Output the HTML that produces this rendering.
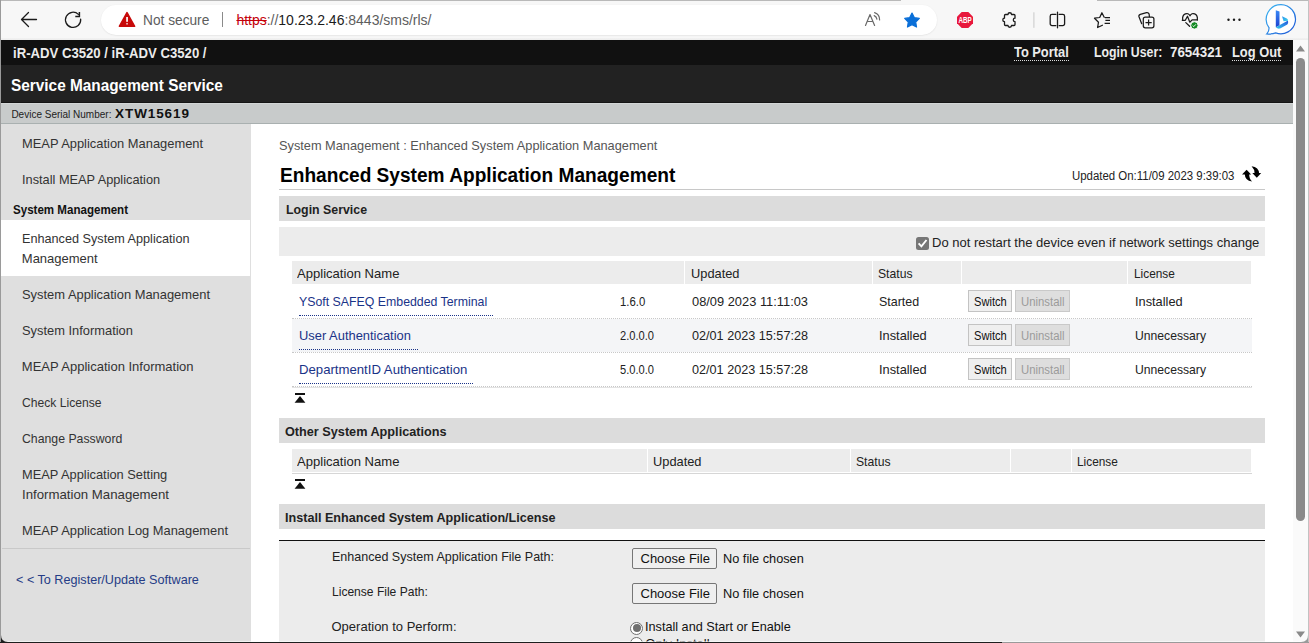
<!DOCTYPE html>
<html><head><meta charset="utf-8">
<style>
*{margin:0;padding:0;box-sizing:border-box}
html,body{width:1309px;height:643px;overflow:hidden;background:#f7f7f7;font-family:"Liberation Sans",sans-serif}
.a{position:absolute}
.t{position:absolute;white-space:nowrap;line-height:1}
svg{position:absolute;overflow:visible}
</style></head><body>
<!-- ===== browser chrome ===== -->
<div class="a" style="left:0;top:0;width:1309px;height:40px;background:#f7f7f7"></div>
<div class="a" style="left:0;top:0;width:901px;height:1px;background:#b9b9b9"></div>
<div class="a" style="left:1097px;top:0;width:212px;height:1px;background:#b9b9b9"></div>
<div class="a" style="left:0;top:0;width:1px;height:643px;background:#9a9a9a"></div>
<div class="a" style="left:1308px;top:0;width:1px;height:643px;background:#c2c2c2"></div>
<!-- address pill -->
<div class="a" style="left:1px;top:38px;width:1307px;height:2px;background:linear-gradient(#f2f2f2,#ececec)"></div>
<div class="a" style="left:101px;top:5px;width:836px;height:30px;border-radius:15px;background:#fff;box-shadow:0 0.5px 1.5px rgba(0,0,0,0.10)"></div>
<!-- back arrow -->
<svg style="left:0;top:0" width="1309" height="40">
  <g fill="none" stroke="#1b1b1b" stroke-width="1.3" stroke-linecap="round" stroke-linejoin="round">
    <path d="M21.5 19.5 H36.5 M28.5 12.5 L21.5 19.5 L28.5 26.5"/>
    <path d="M78.4 14.4 A7.6 7.6 0 1 0 80.65 19.1"/>
    <path d="M79.4 12.1 V16.6 H75.3" stroke-width="1.5" stroke-linecap="butt" stroke-linejoin="miter"/>
    <!-- read aloud -->
    <path d="M865.5 25.5 L870 14.6 L874.6 25.5 M867.1 21.5 H873" stroke="#6a6a6a" stroke-width="1.2"/>
    <path d="M874.2 15.6 A4.6 4.6 0 0 1 876.9 19.1" stroke="#6a6a6a" stroke-width="1.2"/>
    <path d="M874.6 12.6 A7.6 7.6 0 0 1 879.6 20" stroke="#6a6a6a" stroke-width="1.2"/>
    <!-- puzzle -->
    <path d="M1004.5 15.5 q0 -1 1 -1 h2.5 a1.75 1.75 0 0 1 3.5 0 h2.5 q1 0 1 1 v2.7 a1.7 1.7 0 0 0 0 3.4 v2.9 q0 1 -1 1 h-2.5 a1.75 1.75 0 0 1 -3.5 0 h-2.5 q-1 0 -1 -1 v-2.9 a1.7 1.7 0 0 1 0 -3.4 z" stroke-width="1.3"/>
    <!-- split screen -->
    <path d="M1055.8 14.4 H1052 a1.8 1.8 0 0 0 -1.8 1.8 v7.6 a1.8 1.8 0 0 0 1.8 1.8 H1055.8 M1057.5 12.2 V27.8 M1059.2 14.4 H1062.8 a1.8 1.8 0 0 1 1.8 1.8 v7.6 a1.8 1.8 0 0 1 -1.8 1.8 H1059.2" stroke-width="1.3"/>
    <!-- favorites star with lines -->
    <path d="M1102.4 25.2 L1097.6 27.5 L1098.5 22.2 L1094.5 18.2 L1099.7 17.5 L1101.9 12.7 L1104.2 17.3" stroke-width="1.25"/>
    <path d="M1104.9 17.6 H1110 M1105.4 20.4 H1110 M1104.6 23.3 H1110" stroke-width="1.25" stroke-linecap="butt"/>
    <!-- collections -->
    <path d="M1141.7 23.7 L1139 16.8 Q1138.4 14.9 1140.3 14.3 L1146.5 12.6 Q1148.4 12.2 1149.1 14 L1149.4 16.6" stroke-width="1.25"/>
    <rect x="1143.3" y="17.1" width="10.6" height="10.7" rx="2" stroke-width="1.25"/>
    <path d="M1148.6 19.4 V25.6 M1145.5 22.5 H1151.7" stroke-width="1.25" stroke-linecap="butt"/>
    <!-- health heart -->
    <path d="M1182.7 19.8 C1181.8 13.8 1188.2 11.4 1190 15.8 C1191.8 11.4 1198.2 13.8 1197.3 19.8" stroke-width="1.25"/>
    <path d="M1181.8 20.3 H1185.3 L1187.5 16.2 L1189.8 22.2 L1192.1 19.9 H1198" stroke-width="1.25" stroke-linecap="butt"/>
    <path d="M1185.8 22.6 L1189.6 26.3" stroke-width="1.25"/>
  </g>
  <!-- warning triangle -->
  <path d="M127 12.6 L134.6 26.3 L119.4 26.3 Z" fill="#c80a0a" stroke="#c80a0a" stroke-width="1.6" stroke-linejoin="round"/>
  <rect x="126.2" y="17" width="1.7" height="4.8" fill="#fff"/>
  <rect x="126.2" y="23.1" width="1.7" height="1.4" fill="#f4c8c8"/>
  <!-- separator in pill -->
  <rect x="222" y="12" width="1" height="15" fill="#8a8a8a"/>
  <!-- star -->
  <path d="M912.00 13.10 L914.29 17.64 L919.32 18.42 L915.71 22.01 L916.53 27.03 L912.00 24.70 L907.47 27.03 L908.29 22.01 L904.68 18.42 L909.71 17.64 Z" fill="#0a6fd8" stroke="#0a6fd8" stroke-width="1.2" stroke-linejoin="round"/>
  <!-- ABP -->
  <path d="M961.7 12 h6.6 l4.7 4.7 v6.6 l-4.7 4.7 h-6.6 l-4.7 -4.7 v-6.6 z" fill="#e8173c"/>
  <text x="958.4" y="22.8" font-family="Liberation Sans" font-weight="bold" font-size="8.4" fill="#fff" textLength="13.2" lengthAdjust="spacingAndGlyphs">ABP</text>
  <!-- toolbar separator -->
  <rect x="1033.4" y="12.3" width="1" height="15.5" fill="#c8c8c8"/>
  <!-- health green check -->
  <circle cx="1194.4" cy="25.4" r="3.7" fill="#138a24" stroke="#f7f7f7" stroke-width="1"/>
  <path d="M1192.6 25.5 l1.2 1.1 l2.1 -2.3" fill="none" stroke="#fff" stroke-width="0.9"/>
  <!-- more dots -->
  <circle cx="1228.5" cy="19.8" r="1.2" fill="#1b1b1b"/>
  <circle cx="1234" cy="19.8" r="1.2" fill="#1b1b1b"/>
  <circle cx="1239.5" cy="19.8" r="1.2" fill="#1b1b1b"/>
  <!-- bing -->
  <defs>
    <linearGradient id="bst" x1="0" y1="0" x2="1" y2="1"><stop offset="0" stop-color="#3ab8f2"/><stop offset="1" stop-color="#1e55d6"/></linearGradient>
    <linearGradient id="bbar" x1="0" y1="0" x2="0" y2="1"><stop offset="0" stop-color="#3a8af5"/><stop offset="1" stop-color="#1a3fd0"/></linearGradient>
    <linearGradient id="brib" x1="0" y1="1" x2="1" y2="0"><stop offset="0" stop-color="#35c6ee"/><stop offset="1" stop-color="#2456dc"/></linearGradient>
    <linearGradient id="btri" x1="0" y1="0" x2="1" y2="1"><stop offset="0" stop-color="#2a90f0"/><stop offset="1" stop-color="#3fd6e6"/></linearGradient>
  </defs>
  <path d="M1281 4.6 a14.7 14.6 0 1 1 -5.3 28.3 q-3.6 1.3 -8.9 1.1 q2.3 -2.3 2.3 -6.2 a14.7 14.6 0 0 1 11.9 -23.2 z" fill="#fff" stroke="url(#bst)" stroke-width="1.2"/>
  <path d="M1275.8 10.2 L1279.5 11.6 V25.3 L1275.8 27.3 Z" fill="url(#bbar)"/>
  <path d="M1275.8 27.3 L1279.5 25.3 L1288 20.6 Q1288.6 22.8 1287.3 24.4 L1280.6 28.3 Q1278 29.6 1275.8 27.3 Z" fill="url(#brib)"/>
  <path d="M1282 16.2 L1286.8 18.5 Q1288.2 19.3 1288 20.7 L1283.6 21.3 Z" fill="url(#btri)"/>
</svg>
<!-- URL -->
<div class="t" style="left:236.4px;top:12.7px;font-size:14px;color:#5d5d5d;letter-spacing:-0.01px"><span style="color:#c5000b;text-decoration:line-through;text-decoration-color:#c5000b">https</span>://<span style="color:#1b1b1b">10.23.2.46</span>:8443/sms/rls/</div>

<!-- ===== page ===== -->
<div class="a" style="left:1px;top:40px;width:1292px;height:25px;background:#111"></div>
<div class="a" style="left:1px;top:65px;width:1292px;height:37px;background:#222"></div>
<div class="a" style="left:1px;top:102px;width:1292px;height:1px;background:#151515"></div>
<div class="a" style="left:1px;top:103px;width:1292px;height:20px;background:#c8cbcb;border-top:1px solid #d3d6d6"></div>
<div class="a" style="left:1px;top:123px;width:1292px;height:1px;background:#a9b0b0"></div>
<!-- dotted underlines top bar -->
<div class="a" style="left:1014px;top:60px;width:55px;height:1px;border-top:1px dotted #ddd"></div>
<div class="a" style="left:1232px;top:60px;width:49px;height:1px;border-top:1px dotted #ddd"></div>

<!-- sidebar -->
<div class="a" style="left:1px;top:124px;width:250px;height:519px;background:#dfdfdf"></div>
<div class="a" style="left:1px;top:220px;width:249px;height:56px;background:#fff"></div>
<div class="a" style="left:2px;top:548px;width:248px;height:1px;background:#c9c9c9"></div>

<!-- main -->
<div class="a" style="left:251px;top:124px;width:1042px;height:519px;background:#fff"></div>
<div class="a" style="left:279px;top:189px;width:986px;height:1px;background:#c8c8c8"></div>
<!-- refresh icon -->
<svg style="left:0;top:0" width="1309" height="643">
  <g fill="#000">
    <path d="M1242 174.4 L1246.6 169.8 L1251.1 174.4 Z"/>
    <path d="M1244.8 174 Q1244.8 180.6 1252.1 181.6 Q1249 178.6 1249.2 174 Z"/>
    <path d="M1252.3 173.1 L1261.2 173.1 L1256.8 177.8 Z"/>
    <path d="M1251.6 166.2 Q1258.9 167.2 1259.1 173.4 L1254.6 173.4 Q1254.6 169.2 1251.6 166.2 Z"/>
  </g>
</svg>
<!-- Login Service section -->
<div class="a" style="left:279px;top:196px;width:986px;height:25px;background:#dcdcdc"></div>
<div class="a" style="left:279px;top:227px;width:986px;height:29px;background:#ececec"></div>
<!-- checkbox -->
<div class="a" style="left:916px;top:236.8px;width:13px;height:13px;border-radius:2.5px;background:#767676"></div>
<svg style="left:0;top:0" width="1309" height="643"><path d="M918.6 243.4 l2.8 2.9 l5.1 -6.3" fill="none" stroke="#fff" stroke-width="1.9"/></svg>

<!-- table 1 header -->
<div class="a" style="left:292px;top:261px;width:392px;height:23px;background:#ececec"></div>
<div class="a" style="left:685px;top:261px;width:187px;height:23px;background:#ececec"></div>
<div class="a" style="left:873px;top:261px;width:88px;height:23px;background:#ececec"></div>
<div class="a" style="left:962px;top:261px;width:165px;height:23px;background:#ececec"></div>
<div class="a" style="left:1128px;top:261px;width:123px;height:23px;background:#ececec"></div>
<!-- rows -->
<div class="a" style="left:292px;top:318px;width:960px;height:1px;border-top:1px dotted #c8c8c8"></div>
<div class="a" style="left:292px;top:319px;width:960px;height:33px;background:#f4f5f7"></div>
<div class="a" style="left:292px;top:352px;width:960px;height:1px;border-top:1px dotted #c8c8c8"></div>
<div class="a" style="left:292px;top:386px;width:960px;height:1px;border-top:1px dotted #c8c8c8"></div>
<div class="a" style="left:292px;top:387px;width:960px;height:1px;background:#e2e2e2"></div>
<!-- link underlines -->
<div class="a" style="left:299px;top:315px;width:194px;height:1px;border-top:1px dotted #1a3388"></div>
<div class="a" style="left:299px;top:349px;width:119px;height:1px;border-top:1px dotted #1a3388"></div>
<div class="a" style="left:299px;top:383px;width:174px;height:1px;border-top:1px dotted #1a3388"></div>
<!-- buttons -->
<div class="a" style="left:968px;top:290px;width:44px;height:22px;background:#efefef;border:1px solid #c3c3c3"></div>
<div class="a" style="left:1015px;top:290px;width:55px;height:22px;background:#dedede;border:1px solid #c9c9c9"></div>
<div class="a" style="left:968px;top:324px;width:44px;height:22px;background:#efefef;border:1px solid #c3c3c3"></div>
<div class="a" style="left:1015px;top:324px;width:55px;height:22px;background:#dedede;border:1px solid #c9c9c9"></div>
<div class="a" style="left:968px;top:358px;width:44px;height:22px;background:#efefef;border:1px solid #c3c3c3"></div>
<div class="a" style="left:1015px;top:358px;width:55px;height:22px;background:#dedede;border:1px solid #c9c9c9"></div>
<!-- to-top icons -->
<svg style="left:0;top:0" width="1309" height="643">
  <g fill="#111">
    <rect x="295" y="393" width="10" height="2"/>
    <path d="M294.6 402.7 L300 396.1 L305.4 402.7 Z"/>
    <rect x="295" y="479" width="10" height="2"/>
    <path d="M294.6 488.7 L300 482.1 L305.4 488.7 Z"/>
  </g>
</svg>

<!-- Other system apps -->
<div class="a" style="left:279px;top:418px;width:986px;height:25px;background:#dcdcdc"></div>
<div class="a" style="left:292px;top:449px;width:355px;height:23px;background:#ececec"></div>
<div class="a" style="left:648px;top:449px;width:202px;height:23px;background:#ececec"></div>
<div class="a" style="left:851px;top:449px;width:159px;height:23px;background:#ececec"></div>
<div class="a" style="left:1011px;top:449px;width:60px;height:23px;background:#ececec"></div>
<div class="a" style="left:1072px;top:449px;width:179px;height:23px;background:#ececec"></div>
<div class="a" style="left:292px;top:473px;width:960px;height:1px;background:#d6d6d6"></div>

<!-- Install -->
<div class="a" style="left:279px;top:504px;width:986px;height:25px;background:#dcdcdc"></div>
<div class="a" style="left:279px;top:540px;width:986px;height:1px;background:#111"></div>
<div class="a" style="left:279px;top:541px;width:986px;height:102px;background:#ececec"></div>
<div class="a" style="left:632px;top:548px;width:85px;height:21px;background:#efefef;border:1px solid #767676;border-radius:2px"></div>
<div class="a" style="left:632px;top:583px;width:85px;height:21px;background:#efefef;border:1px solid #767676;border-radius:2px"></div>
<div class="t" style="left:640.5px;top:552.2px;font-size:13px;color:#111">Choose File</div>
<div class="t" style="left:640.5px;top:587.2px;font-size:13px;color:#111">Choose File</div>
<!-- radios -->
<div class="a" style="left:630px;top:621.5px;width:13px;height:13px;border-radius:50%;border:1px solid #6f6f6f;background:#fff"></div>
<div class="a" style="left:632.5px;top:624px;width:8px;height:8px;border-radius:50%;background:#6f6f6f"></div>
<div class="a" style="left:630px;top:637px;width:13px;height:13px;border-radius:50%;border:1px solid #6f6f6f;background:#fff"></div>

<div class="t" style="left:143.30px;top:12.75px;font-size:14px;color:#5d5d5d;transform:scaleX(0.9794);transform-origin:0 0;">Not secure</div>
<div class="t" style="left:12.80px;top:46.05px;font-size:14px;color:#ececec;font-weight:bold;transform:scaleX(0.9385);transform-origin:0 0;">iR-ADV C3520 / iR-ADV C3520 /</div>
<div class="t" style="left:1014.00px;top:45.05px;font-size:14px;color:#ececec;font-weight:bold;transform:scaleX(0.9173);transform-origin:0 0;">To Portal</div>
<div class="t" style="left:1093.50px;top:45.05px;font-size:14px;color:#ececec;font-weight:bold;transform:scaleX(0.8781);transform-origin:0 0;">Login User:</div>
<div class="t" style="left:1170.00px;top:45.05px;font-size:14px;color:#ececec;font-weight:bold;transform:scaleX(0.9541);transform-origin:0 0;">7654321</div>
<div class="t" style="left:1232.00px;top:45.05px;font-size:14px;color:#ececec;font-weight:bold;transform:scaleX(0.9189);transform-origin:0 0;">Log Out</div>
<div class="t" style="left:11.00px;top:77.66px;font-size:16px;color:#ffffff;font-weight:bold;transform:scaleX(0.9603);transform-origin:0 0;">Service Management Service</div>
<div class="t" style="left:11.40px;top:110.33px;font-size:10px;color:#222;">Device Serial Number:</div>
<div class="t" style="left:115.10px;top:107.27px;font-size:13.5px;color:#111;font-weight:bold;letter-spacing:0.9px;">XTW15619</div>
<div class="t" style="left:22.00px;top:137.00px;font-size:13px;color:#333;transform:scaleX(0.9916);transform-origin:0 0;">MEAP Application Management</div>
<div class="t" style="left:22.00px;top:173.00px;font-size:13px;color:#333;transform:scaleX(0.9815);transform-origin:0 0;">Install MEAP Application</div>
<div class="t" style="left:13.20px;top:203.62px;font-size:12.5px;color:#111;font-weight:bold;transform:scaleX(0.9248);transform-origin:0 0;">System Management</div>
<div class="t" style="left:21.80px;top:232.20px;font-size:13px;color:#333;transform:scaleX(0.9739);transform-origin:0 0;">Enhanced System Application</div>
<div class="t" style="left:21.80px;top:251.70px;font-size:13px;color:#333;">Management</div>
<div class="t" style="left:21.80px;top:288.00px;font-size:13px;color:#333;transform:scaleX(0.9929);transform-origin:0 0;">System Application Management</div>
<div class="t" style="left:21.80px;top:323.80px;font-size:13px;color:#333;transform:scaleX(0.9903);transform-origin:0 0;">System Information</div>
<div class="t" style="left:21.80px;top:359.90px;font-size:13px;color:#333;">MEAP Application Information</div>
<div class="t" style="left:21.80px;top:396.00px;font-size:13px;color:#333;transform:scaleX(0.9324);transform-origin:0 0;">Check License</div>
<div class="t" style="left:21.80px;top:431.70px;font-size:13px;color:#333;transform:scaleX(0.9442);transform-origin:0 0;">Change Password</div>
<div class="t" style="left:21.80px;top:468.20px;font-size:13px;color:#333;transform:scaleX(0.9869);transform-origin:0 0;">MEAP Application Setting</div>
<div class="t" style="left:21.80px;top:487.80px;font-size:13px;color:#333;transform:scaleX(1.0171);transform-origin:0 0;">Information Management</div>
<div class="t" style="left:21.80px;top:524.10px;font-size:13px;color:#333;transform:scaleX(0.9907);transform-origin:0 0;">MEAP Application Log Management</div>
<div class="t" style="left:15.70px;top:573.10px;font-size:13px;color:#253c86;transform:scaleX(0.9708);transform-origin:0 0;">&lt; &lt; To Register/Update Software</div>
<div class="t" style="left:279.20px;top:139.00px;font-size:13px;color:#555;transform:scaleX(0.9822);transform-origin:0 0;">System Management : Enhanced System Application Management</div>
<div class="t" style="left:280.00px;top:165.59px;font-size:19.5px;color:#000;font-weight:bold;transform:scaleX(0.9798);transform-origin:0 0;">Enhanced System Application Management</div>
<div class="t" style="left:1071.60px;top:169.74px;font-size:12px;color:#222;transform:scaleX(0.9520);transform-origin:0 0;">Updated On:11/09 2023 9:39:03</div>
<div class="t" style="left:285.60px;top:203.82px;font-size:12.5px;color:#222;font-weight:bold;transform:scaleX(0.9882);transform-origin:0 0;">Login Service</div>
<div class="t" style="left:932.00px;top:236.00px;font-size:13px;color:#222;">Do not restart the device even if network settings change</div>
<div class="t" style="left:297.40px;top:266.80px;font-size:13px;color:#222;transform:scaleX(1.0050);transform-origin:0 0;">Application Name</div>
<div class="t" style="left:690.70px;top:266.80px;font-size:13px;color:#222;transform:scaleX(0.9868);transform-origin:0 0;">Updated</div>
<div class="t" style="left:877.90px;top:266.80px;font-size:13px;color:#222;transform:scaleX(0.9361);transform-origin:0 0;">Status</div>
<div class="t" style="left:1134.40px;top:266.80px;font-size:13px;color:#222;transform:scaleX(0.9105);transform-origin:0 0;">License</div>
<div class="t" style="left:299.30px;top:294.50px;font-size:13px;color:#1a3388;transform:scaleX(0.9482);transform-origin:0 0;">YSoft SAFEQ Embedded Terminal</div>
<div class="t" style="left:620.20px;top:294.50px;font-size:13px;color:#222;transform:scaleX(0.8750);transform-origin:0 0;">1.6.0</div>
<div class="t" style="left:691.50px;top:294.50px;font-size:13px;color:#222;transform:scaleX(0.9885);transform-origin:0 0;">08/09 2023 11:11:03</div>
<div class="t" style="left:879.30px;top:294.50px;font-size:13px;color:#222;transform:scaleX(0.9567);transform-origin:0 0;">Started</div>
<div class="t" style="left:1135.30px;top:294.50px;font-size:13px;color:#222;transform:scaleX(0.9831);transform-origin:0 0;">Installed</div>
<div class="t" style="left:299.30px;top:328.50px;font-size:13px;color:#1a3388;transform:scaleX(0.9925);transform-origin:0 0;">User Authentication</div>
<div class="t" style="left:620.20px;top:328.50px;font-size:13px;color:#222;transform:scaleX(0.8552);transform-origin:0 0;">2.0.0.0</div>
<div class="t" style="left:691.50px;top:328.50px;font-size:13px;color:#222;transform:scaleX(0.9725);transform-origin:0 0;">02/01 2023 15:57:28</div>
<div class="t" style="left:879.30px;top:328.50px;font-size:13px;color:#222;transform:scaleX(0.9851);transform-origin:0 0;">Installed</div>
<div class="t" style="left:1135.30px;top:328.50px;font-size:13px;color:#222;transform:scaleX(0.9358);transform-origin:0 0;">Unnecessary</div>
<div class="t" style="left:299.30px;top:362.50px;font-size:13px;color:#1a3388;transform:scaleX(1.0124);transform-origin:0 0;">DepartmentID Authentication</div>
<div class="t" style="left:620.20px;top:362.50px;font-size:13px;color:#222;transform:scaleX(0.8552);transform-origin:0 0;">5.0.0.0</div>
<div class="t" style="left:691.50px;top:362.50px;font-size:13px;color:#222;transform:scaleX(0.9725);transform-origin:0 0;">02/01 2023 15:57:28</div>
<div class="t" style="left:879.30px;top:362.50px;font-size:13px;color:#222;transform:scaleX(0.9851);transform-origin:0 0;">Installed</div>
<div class="t" style="left:1135.30px;top:362.50px;font-size:13px;color:#222;transform:scaleX(0.9358);transform-origin:0 0;">Unnecessary</div>
<div class="t" style="left:973.70px;top:295.54px;font-size:12px;color:#111;transform:scaleX(0.9280);transform-origin:0 0;">Switch</div>
<div class="t" style="left:1020.50px;top:295.54px;font-size:12px;color:#9b9b9b;transform:scaleX(0.9453);transform-origin:0 0;">Uninstall</div>
<div class="t" style="left:973.70px;top:329.54px;font-size:12px;color:#111;transform:scaleX(0.9280);transform-origin:0 0;">Switch</div>
<div class="t" style="left:1020.50px;top:329.54px;font-size:12px;color:#9b9b9b;transform:scaleX(0.9453);transform-origin:0 0;">Uninstall</div>
<div class="t" style="left:973.70px;top:363.54px;font-size:12px;color:#111;transform:scaleX(0.9280);transform-origin:0 0;">Switch</div>
<div class="t" style="left:1020.50px;top:363.54px;font-size:12px;color:#9b9b9b;transform:scaleX(0.9453);transform-origin:0 0;">Uninstall</div>
<div class="t" style="left:285.40px;top:426.02px;font-size:12.5px;color:#222;font-weight:bold;transform:scaleX(1.0140);transform-origin:0 0;">Other System Applications</div>
<div class="t" style="left:297.40px;top:455.00px;font-size:13px;color:#222;transform:scaleX(1.0050);transform-origin:0 0;">Application Name</div>
<div class="t" style="left:652.80px;top:455.00px;font-size:13px;color:#222;transform:scaleX(0.9868);transform-origin:0 0;">Updated</div>
<div class="t" style="left:856.00px;top:455.00px;font-size:13px;color:#222;transform:scaleX(0.9361);transform-origin:0 0;">Status</div>
<div class="t" style="left:1076.60px;top:455.00px;font-size:13px;color:#222;transform:scaleX(0.9105);transform-origin:0 0;">License</div>
<div class="t" style="left:285.00px;top:512.02px;font-size:12.5px;color:#222;font-weight:bold;transform:scaleX(1.0081);transform-origin:0 0;">Install Enhanced System Application/License</div>
<div class="t" style="left:331.50px;top:550.00px;font-size:13px;color:#222;transform:scaleX(0.9631);transform-origin:0 0;">Enhanced System Application File Path:</div>
<div class="t" style="left:331.50px;top:585.00px;font-size:13px;color:#222;transform:scaleX(0.9271);transform-origin:0 0;">License File Path:</div>
<div class="t" style="left:331.50px;top:619.80px;font-size:13px;color:#222;">Operation to Perform:</div>
<div class="t" style="left:722.50px;top:552.20px;font-size:13px;color:#111;transform:scaleX(0.9808);transform-origin:0 0;">No file chosen</div>
<div class="t" style="left:722.50px;top:587.20px;font-size:13px;color:#111;transform:scaleX(0.9808);transform-origin:0 0;">No file chosen</div>
<div class="t" style="left:645.30px;top:619.50px;font-size:13px;color:#111;transform:scaleX(0.9740);transform-origin:0 0;">Install and Start or Enable</div>
<div class="t" style="left:645.30px;top:637.00px;font-size:13px;color:#111;">Only Install</div>

<!-- scrollbar -->
<div class="a" style="left:1293px;top:40px;width:15px;height:602px;background:#fafafa"></div>
<svg style="left:0;top:0" width="1309" height="643">
  <path d="M1296 51.5 L1300.5 45.5 L1305 51.5 Z" fill="#8a8a8a"/>
  <path d="M1296 631.5 L1300.5 637.5 L1305 631.5 Z" fill="#8a8a8a"/>
</svg>
<div class="a" style="left:1296px;top:58px;width:9px;height:463px;border-radius:4.5px;background:#8a8a8a"></div>

<!-- bottom window border -->
<div class="a" style="left:1px;top:641px;width:1307px;height:1px;background:rgba(255,255,255,0.55)"></div>
<div class="a" style="left:0;top:642px;width:1002px;height:1px;background:#1e1e1e"></div>
<div class="a" style="left:1002px;top:642px;width:307px;height:1px;background:#9a9a9a"></div>
<svg style="left:0;top:0" width="1309" height="643">
  <path d="M1 635 Q1 642 8 642 L1 642 Z" fill="#1e1e1e"/>
  <path d="M1308 635 Q1308 642 1301 642 L1308 642 Z" fill="#9a9a9a"/>
</svg>
</body></html>
